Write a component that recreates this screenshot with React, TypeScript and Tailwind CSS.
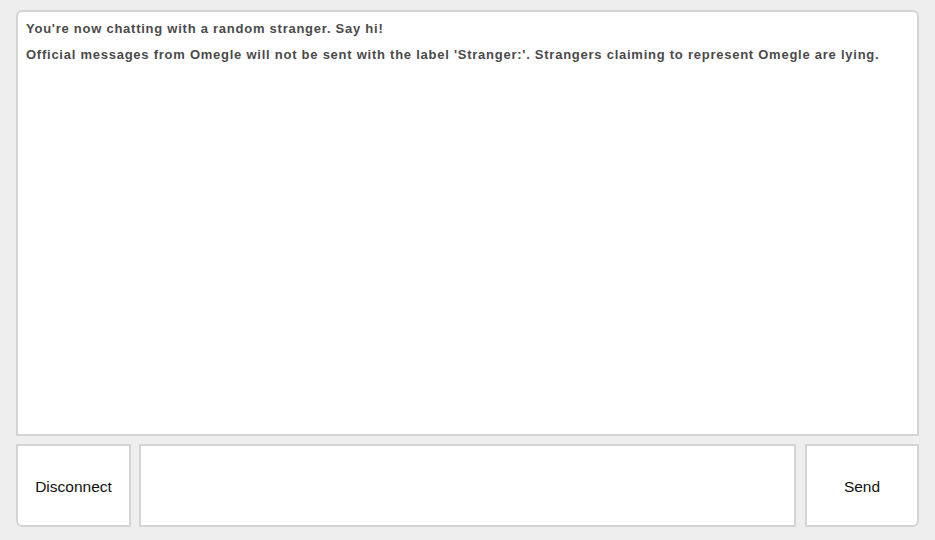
export default function App() {
  return (
    <div
      className="w-[935px] h-[540px] bg-[#eeeeee] flex flex-col px-[16px] pt-[10px] pb-[13px] gap-[8px]"
      style={{ fontFamily: '"Liberation Sans", Arial, sans-serif' }}
    >
      <div className="h-[426px] bg-white border-2 border-[#d4d4d4] rounded-t-[6px] px-[8px] py-[4px] text-[13px] font-bold text-[#4a4a4a] tracking-[0.75px]">
        <p className="leading-[26px]">You're now chatting with a random stranger. Say hi!</p>
        <p className="leading-[26px]">
          Official messages from Omegle will not be sent with the label 'Stranger:'. Strangers claiming to represent Omegle are lying.
        </p>
      </div>
      <div className="flex-1 flex gap-[8px]">
        <button className="w-[115px] pt-[3px] bg-white border-2 border-[#d4d4d4] rounded-bl-[6px] text-[15.5px] text-[#111]">
          Disconnect
        </button>
        <div className="w-[657px] bg-white border-2 border-[#d4d4d4]">
          <textarea className="w-full h-full resize-none outline-none bg-transparent" />
        </div>
        <button className="w-[114px] ml-[1px] pt-[3px] bg-white border-2 border-[#d4d4d4] rounded-br-[6px] text-[15.5px] text-[#111]">
          Send
        </button>
      </div>
    </div>
  );
}
